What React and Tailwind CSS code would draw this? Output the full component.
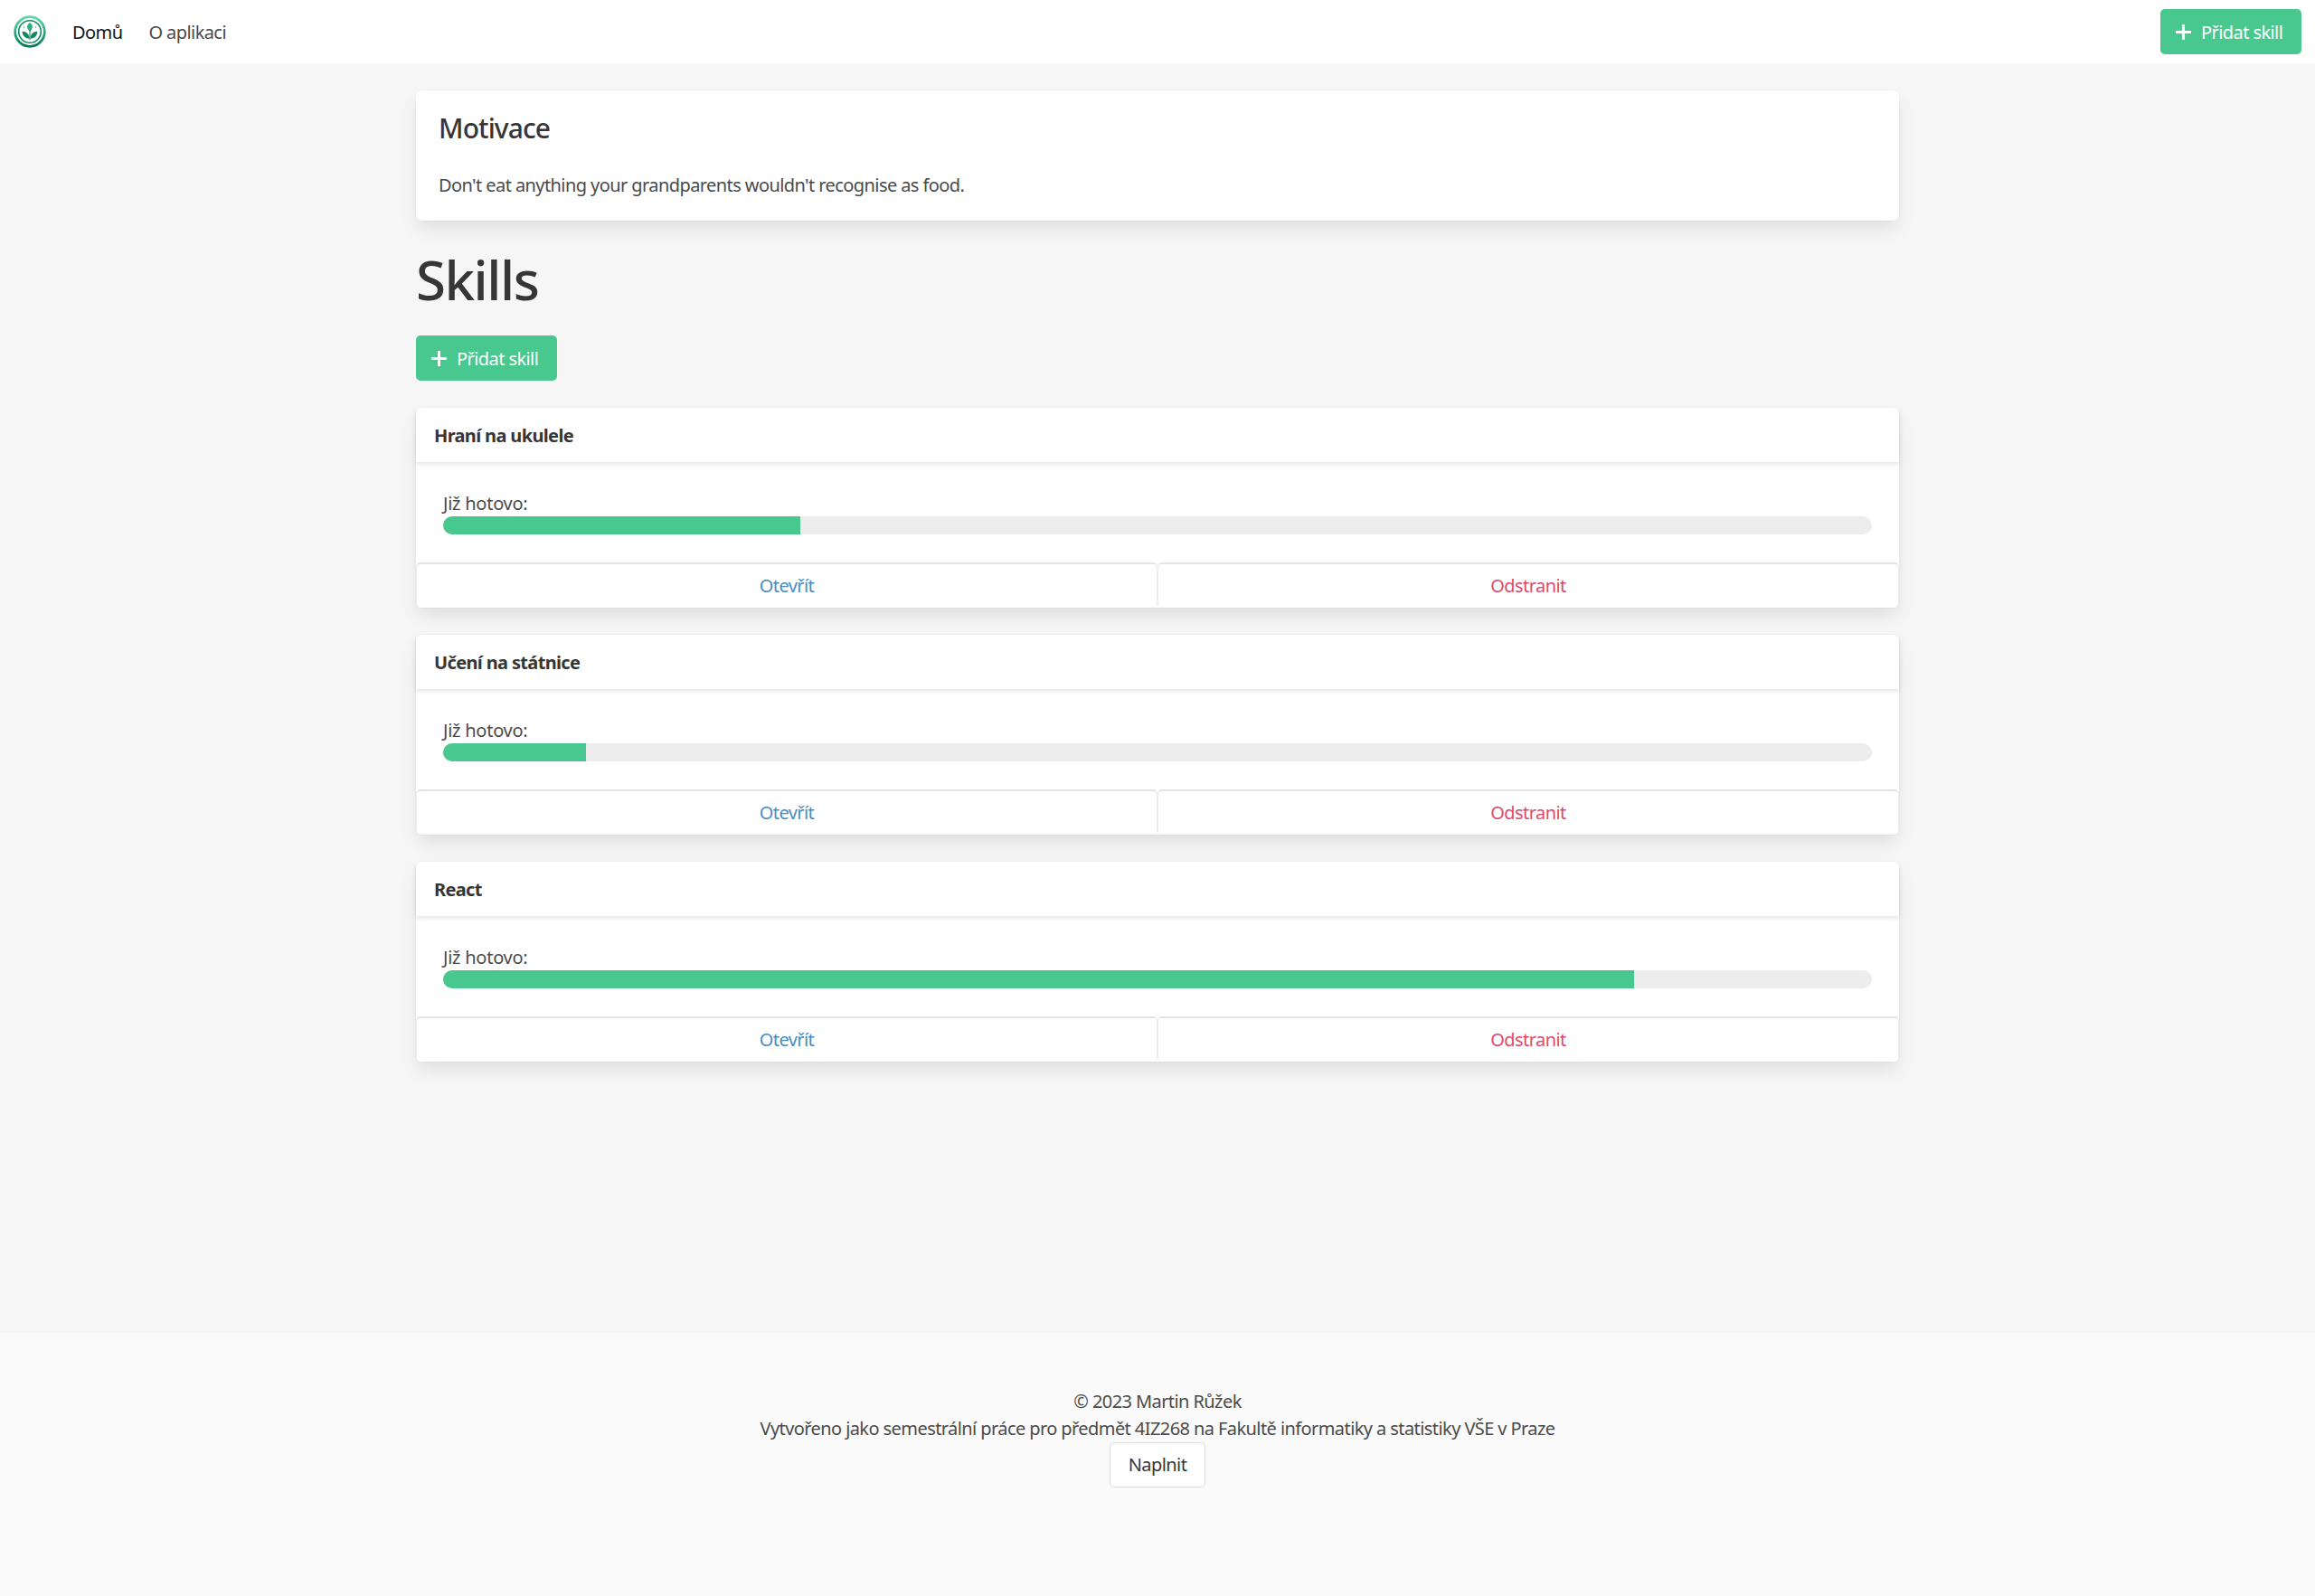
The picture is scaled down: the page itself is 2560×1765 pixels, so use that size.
const skills = [
    { name: "Hraní na ukulele", done: "25%" },
    { name: "Učení na státnice", done: "10%" },
    { name: "React", done: "83.33%" },
]

function Logo() {
    return (
        <svg width="36" height="36" viewBox="0 0 36 36" className="shrink-0">
            <defs>
                <linearGradient id="ring" x1="0" y1="0" x2="0" y2="1">
                    <stop offset="0" stopColor="#5cdcaa" />
                    <stop offset="1" stopColor="#0b7a56" />
                </linearGradient>
            </defs>
            <circle cx="18" cy="18" r="16.3" fill="none" stroke="url(#ring)" strokeWidth="2.8" />
            <circle cx="18" cy="18" r="12.3" fill="none" stroke="#0f8a62" strokeWidth="1.6" />
            <path d="M18 8c3.600 2.400 4.200 6 0 9.800c-4.200-3.800-3.600-7.400 0-9.800z" fill="#2bb083" />
            <path d="M17.600 25.500c-.2-4.500-3.300-7.800-8-7.800c.2 4.800 3.400 8.200 8 7.800z" fill="#0e8a62" />
            <path d="M18.400 25.500c.2-4.500 3.300-7.800 8-7.800c-.2 4.800-3.400 8.200-8 7.800z" fill="#0e8a62" />
            <path d="M18 16v11" stroke="#0e7f5a" strokeWidth="1" />
            <circle cx="11.500" cy="13" r=".7" fill="#2bb083" />
            <circle cx="24.500" cy="13" r=".7" fill="#2bb083" />
        </svg>
    )
}

function AddButton() {
    return (
        <button className="h-[50px] w-[156px] rounded-[5px] bg-[#48c78e] text-white flex items-center pl-[17px]">
            <svg width="17" height="17" viewBox="0 0 17 17" className="shrink-0">
                <path d="M8.500 0v17M0 8.500h17" stroke="#fff" strokeWidth="3" />
            </svg>
            <span className="ml-[11px] pt-[1px]">Přidat skill</span>
        </button>
    )
}

function SkillCard({ skill }) {
    return (
        <div className="bg-white rounded-[7px] shadow-[0_10px_20px_-2.5px_rgba(10,10,10,0.1),0_0_0_1px_rgba(10,10,10,0.02)] mb-[30px]">
            <div className="h-[60px] px-[20px] pt-[1px] flex items-center font-bold tracking-[-0.65px] text-[#363636] shadow-[0_2.5px_5px_rgba(10,10,10,0.1)]">
                {skill.name}
            </div>
            <div className="px-[30px] pt-[30px] pb-[31px]">
                <div className="tracking-[-0.25px] relative top-[1px]">Již hotovo:</div>
                <div className="h-[20px] rounded-full bg-[#ededed] overflow-hidden">
                    <div className="h-full bg-[#48c78e]" style={{ width: skill.done }}></div>
                </div>
            </div>
            <div className="flex">
                <button className="flex-1 h-[50px] bg-white text-[#4a8cc4] border-t-2 border-l border-r border-t-[#e4e4e4] border-l-[#ededed] border-r-[#ededed] rounded-[5px]">Otevřít</button>
                <button className="flex-1 h-[50px] bg-white text-[#dd4a6c] border-t-2 border-l border-r border-t-[#e4e4e4] border-l-[#ededed] border-r-[#ededed] rounded-[5px]">Odstranit</button>
            </div>
        </div>
    )
}

export default function App() {
    return (
        <div className="min-h-[1765px] flex flex-col bg-[#f6f6f6] text-[#4a4a4a] text-[20px] leading-[30px] font-['Noto_Sans',sans-serif] tracking-[-0.58px]">
            <nav className="h-[70px] bg-white flex items-center pl-[15px] pr-[15px]">
                <Logo />
                <a className="ml-[29px] pt-[2px] text-[#161616]">Domů</a>
                <a className="ml-[29px] pt-[2px]">O aplikaci</a>
                <div className="ml-auto">
                    <AddButton />
                </div>
            </nav>

            <main className="flex-1 w-[1640px] mx-auto pt-[30px]">
                <div className="bg-white rounded-[7px] pt-[25px] px-[25px] pb-[24px] shadow-[0_10px_20px_-2.5px_rgba(10,10,10,0.1),0_0_0_1px_rgba(10,10,10,0.02)]">
                    <h2 className="text-[30px] leading-[34px] font-[550] tracking-[-0.9px] text-[#363636] mb-[31px]">Motivace</h2>
                    <p>Don't eat anything your grandparents wouldn't recognise as food.</p>
                </div>

                <h1 className="text-[60px] leading-[64px] pt-[3px] font-[550] tracking-[-1.5px] text-[#363636] mt-[30px] mb-[30px]">Skills</h1>

                <div className="mb-[30px]">
                    <AddButton />
                </div>

                {skills.map((skill) => (
                    <SkillCard key={skill.name} skill={skill} />
                ))}
            </main>

            <footer className="bg-[#fafafa] pt-[61px] pb-[120px] flex flex-col items-center text-center">
                <p>© 2023 Martin Růžek</p>
                <p>Vytvořeno jako semestrální práce pro předmět 4IZ268 na Fakultě informatiky a statistiky VŠE v Praze</p>
                <button className="h-[50px] w-[106px] bg-white border border-[#dbdbdb] rounded-[5px] text-[#363636]">Naplnit</button>
            </footer>
        </div>
    )
}
